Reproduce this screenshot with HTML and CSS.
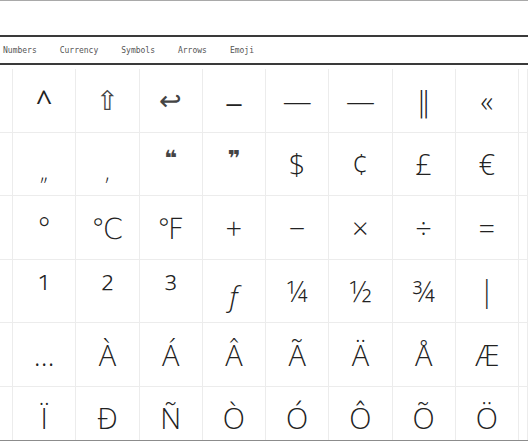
FILE: index.html
```html
<!DOCTYPE html>
<html lang="en">
  <head>
    <meta charset="UTF-8" />
    <meta name="viewport" content="width=device-width, initial-scale=1.0" />
    <title>Special Characters</title>
    <link rel="stylesheet" href="styles.css">
  </head>
  <body>
    <div class="page">
      <div class="search"></div>
      <nav class="tabs">
        <span class="tab">Numbers</span>
        <span class="tab">Currency</span>
        <span class="tab">Symbols</span>
        <span class="tab">Arrows</span>
        <span class="tab">Emoji</span>
      </nav>

      <div class="grid">
        <div class="cell"></div>
        <div class="cell caret">^</div>
        <div class="cell arrow">⇧</div>
        <div class="cell arrow">↩</div>
        <div class="cell dash">–</div>
        <div class="cell">—</div>
        <div class="cell">―</div>
        <div class="cell">‖</div>
        <div class="cell">«</div>
        <div class="cell"></div>

        <div class="cell"></div>
        <div class="cell low">„</div>
        <div class="cell low">‚</div>
        <div class="cell quote">❝</div>
        <div class="cell quote">❞</div>
        <div class="cell">$</div>
        <div class="cell">¢</div>
        <div class="cell">£</div>
        <div class="cell">€</div>
        <div class="cell"></div>

        <div class="cell"></div>
        <div class="cell">°</div>
        <div class="cell">℃</div>
        <div class="cell">℉</div>
        <div class="cell">+</div>
        <div class="cell">−</div>
        <div class="cell">×</div>
        <div class="cell">÷</div>
        <div class="cell">=</div>
        <div class="cell"></div>

        <div class="cell"></div>
        <div class="cell sup">¹</div>
        <div class="cell sup">²</div>
        <div class="cell sup">³</div>
        <div class="cell florin">ƒ</div>
        <div class="cell">¼</div>
        <div class="cell">½</div>
        <div class="cell">¾</div>
        <div class="cell">|</div>
        <div class="cell"></div>

        <div class="cell"></div>
        <div class="cell">…</div>
        <div class="cell">À</div>
        <div class="cell">Á</div>
        <div class="cell">Â</div>
        <div class="cell">Ã</div>
        <div class="cell">Ä</div>
        <div class="cell">Å</div>
        <div class="cell">Æ</div>
        <div class="cell"></div>

        <div class="cell"></div>
        <div class="cell">Ï</div>
        <div class="cell">Ð</div>
        <div class="cell">Ñ</div>
        <div class="cell">Ò</div>
        <div class="cell">Ó</div>
        <div class="cell">Ô</div>
        <div class="cell">Õ</div>
        <div class="cell">Ö</div>
        <div class="cell"></div>
      </div>
    </div>
  </body>
</html>
```

FILE: styles.css
```css
:root {
  --rule-dark: #3a3a3a;
  --rule-light: #ececec;
  --glyph-color: #222;
}
body {
  margin: 0;
  background: #fff;
  font-family: "Open Sans", "DejaVu Sans", sans-serif;
}
.page {
  height: 439px;
  border-top: 1px solid #a9a9a9;
  border-bottom: 1px solid #8c8c8c;
  overflow: hidden;
}
.search {
  height: 34px;
}
.tabs {
  display: flex;
  align-items: center;
  height: 26px;
  padding-left: 3px;
  gap: 23px;
  border-top: 2px solid var(--rule-dark);
  border-bottom: 2px solid var(--rule-dark);
}
.tab {
  font-family: "DejaVu Sans Mono", "Liberation Mono", monospace;
  font-size: 8px;
  color: #555;
}
.grid {
  display: grid;
  grid-template-columns: 13px repeat(8, 63.25px) 1fr;
  grid-auto-rows: 63.5px;
  padding-top: 4px;
}
.cell {
  box-sizing: border-box;
  display: flex;
  align-items: center;
  justify-content: center;
  border-right: 1px solid var(--rule-light);
  border-bottom: 1px solid var(--rule-light);
  font-size: 29px;
  font-weight: 300;
  color: var(--glyph-color);
}
.caret {
  font-weight: 400;
}
.arrow {
  font-family: "DejaVu Sans", sans-serif;
  font-size: 27px;
  color: #444;
}
.dash {
  font-size: 36px;
  padding-top: 2px;
}
.low {
  font-size: 22px;
  padding-top: 14px;
}
.quote {
  font-family: "DejaVu Sans", sans-serif;
  font-weight: bold;
  font-size: 22px;
  padding-bottom: 10px;
  color: #444;
}
.florin {
  font-style: italic;
  padding-top: 8px;
}
.sup {
  font-size: 35px;
  padding-top: 2px;
}
```
